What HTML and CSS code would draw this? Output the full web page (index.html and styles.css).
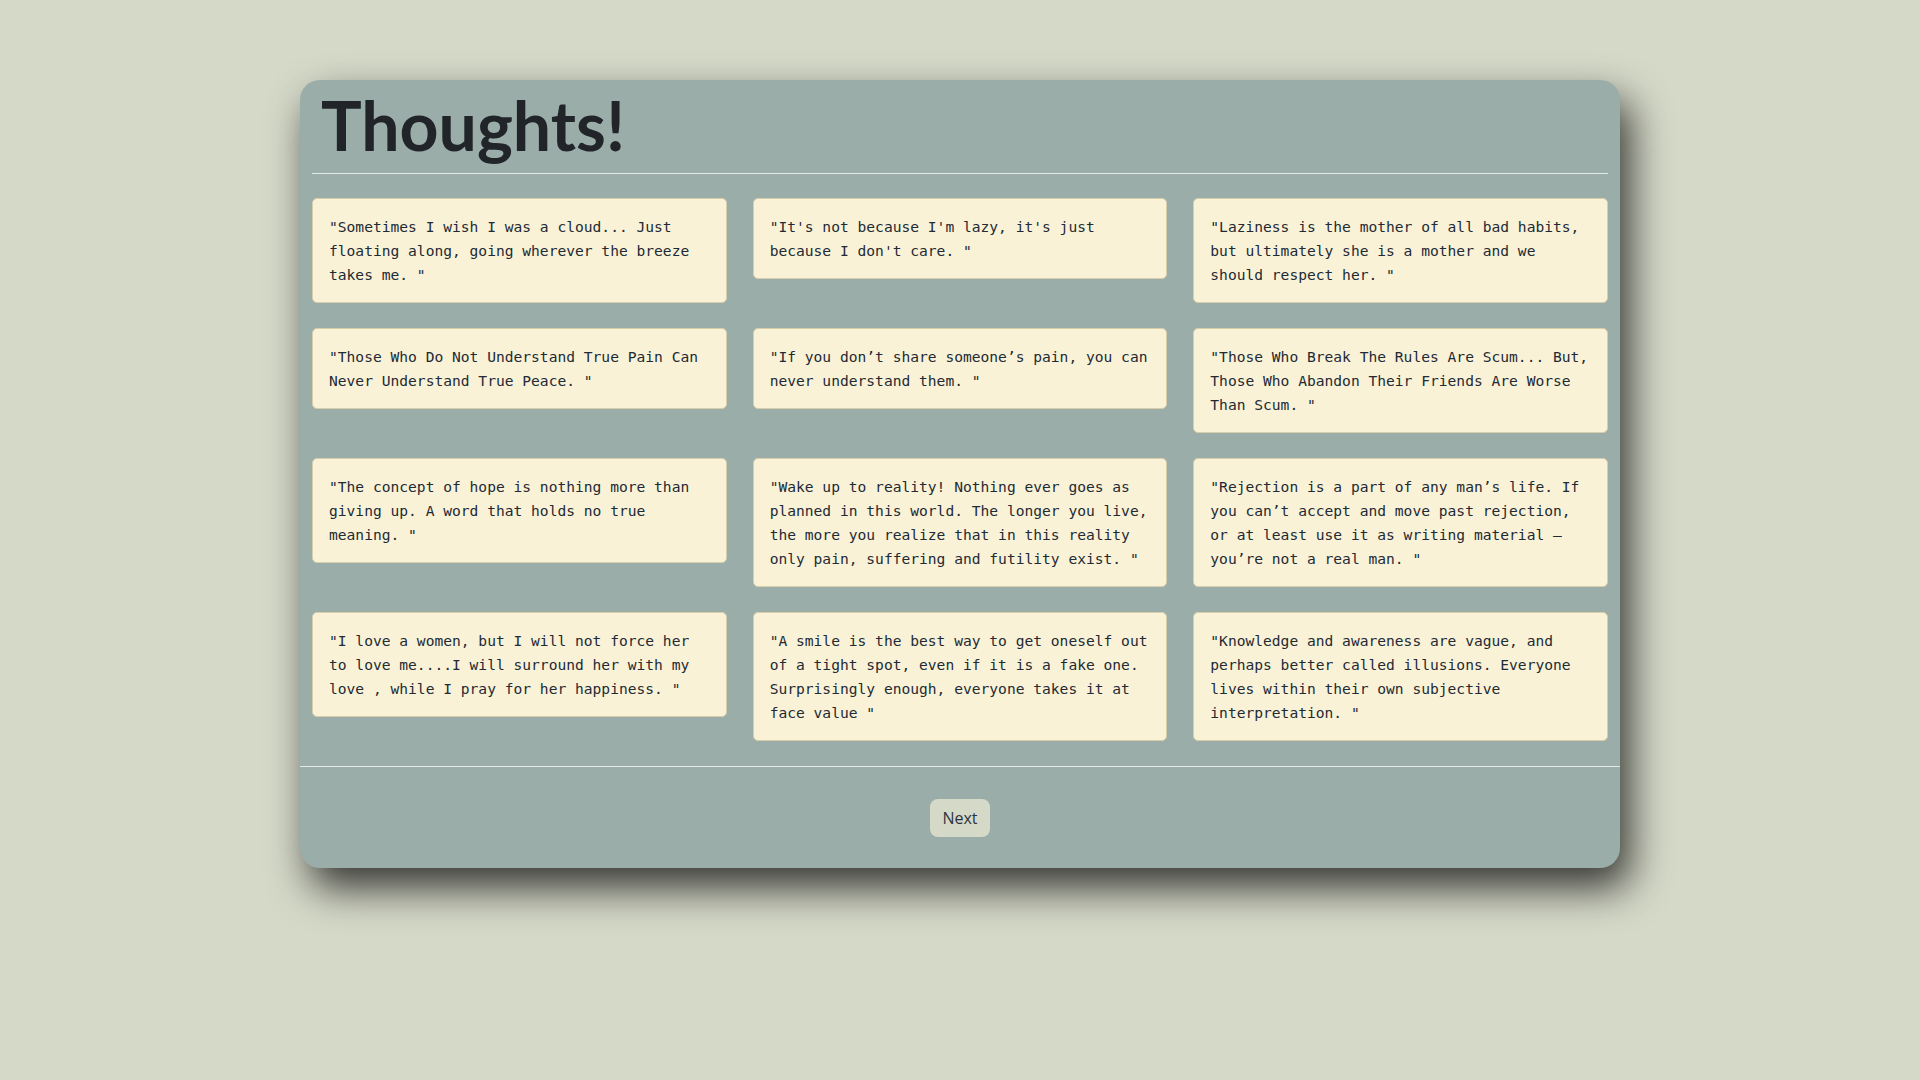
FILE: index.html
```html
<!DOCTYPE html>
<html lang="en">
<head>
<meta charset="utf-8">
<title>Thoughts!</title>
<link rel="stylesheet" href="styles.css">
</head>
<body>
<main class="panel">
  <header class="panel-head">
    <h1 class="title">Thoughts!</h1>
    <hr class="rule">
  </header>
  <section class="grid">
    <div class="card">"Sometimes I wish I was a cloud... Just floating along, going wherever the breeze takes me. "</div>
    <div class="card">"It's not because I'm lazy, it's just because I don't care. "</div>
    <div class="card">"Laziness is the mother of all bad habits, but ultimately she is a mother and we should respect her. "</div>
    <div class="card">"Those Who Do Not Understand True Pain Can Never Understand True Peace. "</div>
    <div class="card">"If you don’t share someone’s pain, you can never understand them. "</div>
    <div class="card">"Those Who Break The Rules Are Scum... But, Those Who Abandon Their Friends Are Worse Than Scum. "</div>
    <div class="card">"The concept of hope is nothing more than giving up. A word that holds no true meaning. "</div>
    <div class="card">"Wake up to reality! Nothing ever goes as planned in this world. The longer you live, the more you realize that in this reality only pain, suffering and futility exist. "</div>
    <div class="card">"Rejection is a part of any man’s life. If you can’t accept and move past rejection, or at least use it as writing material – you’re not a real man. "</div>
    <div class="card">"I love a women, but I will not force her to love me....I will surround her with my love , while I pray for her happiness. "</div>
    <div class="card">"A smile is the best way to get oneself out of a tight spot, even if it is a fake one. Surprisingly enough, everyone takes it at face value "</div>
    <div class="card">"Knowledge and awareness are vague, and perhaps better called illusions. Everyone lives within their own subjective interpretation. "</div>
  </section>
  <footer class="panel-foot">
    <button class="btn-next" type="button">Next</button>
  </footer>
</main>
</body>
</html>
```
FILE: styles.css
```css
html, body {
  margin: 0;
  padding: 0;
}
body {
  background: #d5d9c8;
  min-height: 1080px;
  font-family: "Open Sans", "Noto Sans", sans-serif;
  color: #212529;
}
.panel {
  width: 1320px;
  margin: 80px auto 0;
  background: #9bada9;
  border-radius: 20px;
  box-shadow: 10px 20px 40px rgba(0, 0, 0, 0.75);
}
.panel-head {
  padding: 4px 12px 0;
}
.title {
  margin: 0;
  padding-left: 9px;
  font-family: Lato, "Open Sans", sans-serif;
  font-weight: 700;
  font-size: 68px;
  line-height: 81.6px;
  color: #212529;
}
.rule {
  margin: 7px 0 0;
  border: 0;
  border-top: 1px solid #e2e8e2;
  height: 0;
}
.grid {
  display: grid;
  grid-template-columns: repeat(3, 1fr);
  gap: 25px 26px;
  align-items: start;
  padding: 24px 12px 25px;
}
.card {
  background: #faf2d6;
  border: 1px solid #d8ceac;
  border-radius: 5px;
  padding: 16px 16px 15px;
  font-family: "DejaVu Sans Mono", "Liberation Mono", monospace;
  font-size: 14.6px;
  line-height: 24px;
  color: #222a35;
}
.panel-foot {
  border-top: 1px solid #e2e8e2;
  display: flex;
  justify-content: center;
  padding: 32px 0 31px;
}
.btn-next {
  height: 38px;
  width: 60px;
  padding: 0;
  border: 0;
  border-radius: 8px;
  background: #d5d9c8;
  font-family: "Open Sans", "Noto Sans", sans-serif;
  font-size: 16px;
  color: #2a3440;
  cursor: pointer;
}
```
